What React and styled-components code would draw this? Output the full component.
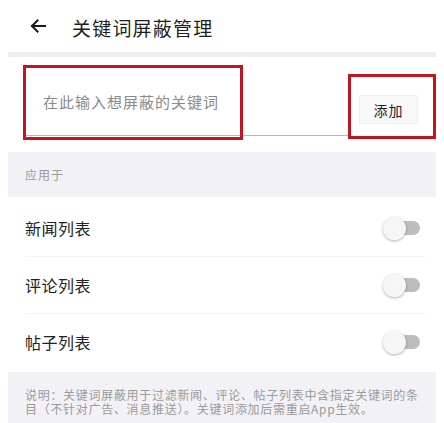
import React from "react";
import styled, { createGlobalStyle } from "styled-components";

const Global = createGlobalStyle`
  html, body { margin: 0; padding: 0; background: #ffffff; }
  body { font-family: "Noto Sans CJK SC", "Noto Sans", sans-serif; }
`;

const Page = styled.div`
  width: 428px;
  margin: 0 8px;
  display: flex;
  flex-direction: column;
`;

const Header = styled.header`
  height: 52px;
  display: flex;
  align-items: center;
  gap: 26px;
  padding-left: 22px;
`;

const Title = styled.h1`
  margin: 0;
  font-size: 19px;
  font-weight: 400;
  letter-spacing: 1.2px;
  color: #1e1e1e;
  line-height: 1;
  padding-top: 2px;
`;

const Strip = styled.div`
  height: ${(p) => p.$h}px;
  background: #efeff3;
`;

const InputSection = styled.section`
  height: 95px;
  display: flex;
  align-items: flex-start;
  padding-left: 17px;
`;

const Field = styled.div`
  position: relative;
  flex: 1;
  margin-top: 8px;
  height: 71px;
  border-bottom: 1px solid #b9b9b9;
  display: flex;
  align-items: center;
  padding-left: 18px;
  padding-top: 2px;
  box-sizing: border-box;
`;

const Placeholder = styled.span`
  font-size: 15px;
  letter-spacing: 1px;
  color: #8a8a8a;
`;

const Highlight = styled.div`
  position: absolute;
  left: -2px;
  top: 0;
  width: 220px;
  height: 75px;
  border: 3px solid #c4141f;
  box-sizing: border-box;
  pointer-events: none;
`;

const ButtonBox = styled.div`
  width: 88px;
  height: 65px;
  margin-top: 17px;
  border: 3px solid #c4141f;
  box-sizing: border-box;
  display: flex;
  padding: 18px 0 0 8px;
`;

const AddButton = styled.button`
  width: 59px;
  height: 29px;
  background: #f8f8f8;
  border: 1px solid #efefef;
  border-radius: 2px;
  font-family: inherit;
  font-size: 14px;
  letter-spacing: 1px;
  color: #222;
  padding: 0;
`;

const SectionHead = styled.div`
  height: 45px;
  background: #f2f2f6;
  display: flex;
  align-items: center;
  padding-left: 17px;
  font-size: 12px;
  letter-spacing: 1px;
  color: #9a9a9a;
`;

const List = styled.div`
  padding-top: 3px;
  display: flex;
  flex-direction: column;
`;

const Row = styled.div`
  height: 56px;
  margin: 0 11px 0 17px;
  display: flex;
  align-items: center;
  justify-content: space-between;
  border-bottom: ${(p) => (p.$last ? "none" : "1px solid #f3f3f5")};
  padding-right: 5px;
`;

const RowLabel = styled.span`
  font-size: 16px;
  letter-spacing: 0.5px;
  color: #222;
`;

const Switch = styled.div`
  position: relative;
  width: 37px;
  height: 23px;
  display: flex;
  align-items: center;
  justify-content: flex-end;
`;

const Track = styled.div`
  width: 30px;
  height: 14px;
  border-radius: 7px;
  background: #bdbdbd;
`;

const Thumb = styled.div`
  position: absolute;
  left: 0;
  top: 0;
  width: 23px;
  height: 23px;
  border-radius: 50%;
  background: #f6f6f6;
  box-shadow: 0 1px 3px rgba(0, 0, 0, 0.3);
`;

const Note = styled.div`
  background: #f2f2f6;
  margin-top: 2px;
  padding: 16px 16px 20px 17px;
  font-size: 12px;
  line-height: 14px;
  letter-spacing: 0.7px;
  color: #9a9a9a;
`;

const BackArrow = () => (
  <svg width="16" height="14" viewBox="0 0 16 14" fill="none">
    <path d="M15 7H2M7.5 1.5L2 7l5.5 5.5" stroke="#1a1a1a" strokeWidth="2" strokeLinecap="square" />
  </svg>
);

const Toggle = () => (
  <Switch>
    <Track />
    <Thumb />
  </Switch>
);

const rows = ["新闻列表", "评论列表", "帖子列表"];

export default function App() {
  return (
    <Page>
      <Global />
      <Header>
        <BackArrow />
        <Title>关键词屏蔽管理</Title>
      </Header>
      <Strip $h={5} />
      <InputSection>
        <Field>
          <Placeholder>在此输入想屏蔽的关键词</Placeholder>
          <Highlight />
        </Field>
        <ButtonBox>
          <AddButton>添加</AddButton>
        </ButtonBox>
      </InputSection>
      <SectionHead>应用于</SectionHead>
      <List>
        {rows.map((r, i) => (
          <Row key={r} $last={i === rows.length - 1}>
            <RowLabel>{r}</RowLabel>
            <Toggle />
          </Row>
        ))}
      </List>
      <Note>
        说明：关键词屏蔽用于过滤新闻、评论、帖子列表中含指定关键词的条目（不针对广告、消息推送）。关键词添加后需重启App生效。
      </Note>
    </Page>
  );
}
